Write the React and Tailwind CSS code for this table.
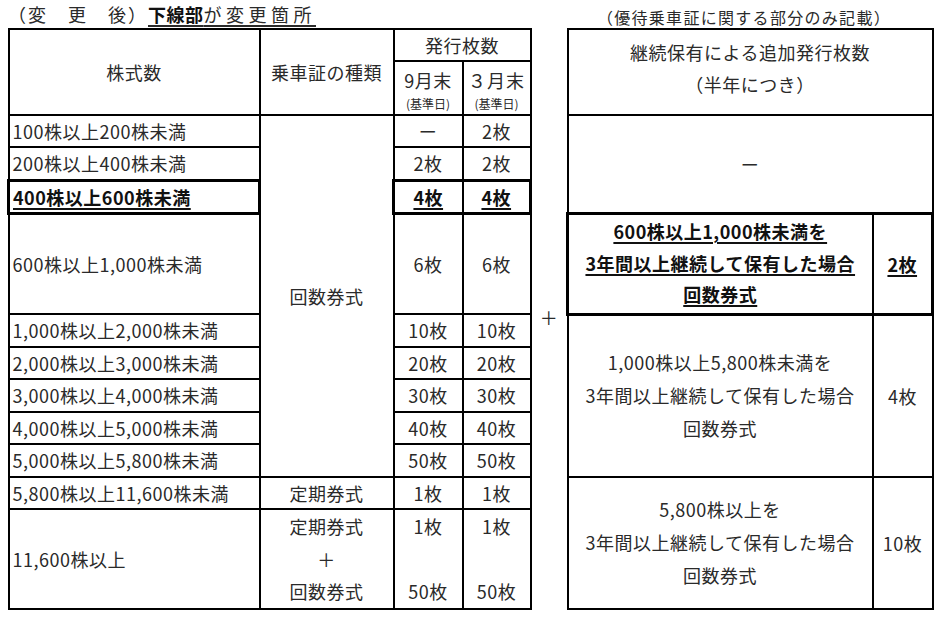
import React from "react";

const td = "border-2 border-black p-0 text-center align-middle";
const tdLeft = "border-2 border-black p-0 pl-[3px] text-left align-middle";
const hl = "underline decoration-2 underline-offset-[3px] font-bold text-[#111]";

const midRows = [
  ["1,000株以上2,000株未満", "10枚"],
  ["2,000株以上3,000株未満", "20枚"],
  ["3,000株以上4,000株未満", "30枚"],
  ["4,000株以上5,000株未満", "40枚"],
  ["5,000株以上5,800株未満", "50枚"],
];

export default function App() {
  return (
    <div className="w-[941px] h-[617px] bg-white text-[#2a2a2a] font-['Noto_Sans_CJK_JP','Noto_Sans',sans-serif] text-[18px] tracking-[0.5px]">
      {/* title line */}
      <div className="flex items-center h-[28px] pl-[8px] pr-[50px]">
        <div className="leading-[22px]">
          <span className="tracking-[2px]">（変　更　後）</span>
          <span className="underline underline-offset-[3px] decoration-[1.5px]">
            <span className="font-bold text-[#111]">下線部</span>
            <span className="tracking-[4.5px]">が変更箇所</span>
          </span>
        </div>
        <div className="ml-auto text-[16px] tracking-[1.3px] leading-[22px] pt-[5px]">
          （優待乗車証に関する部分のみ記載）
        </div>
      </div>

      <div className="pl-[7px]">
        <table className="table-fixed border-collapse w-[924px] leading-[26px]">
          <colgroup>
            <col className="w-[251px]" />
            <col className="w-[134px]" />
            <col className="w-[69px]" />
            <col className="w-[68px]" />
            <col className="w-[37px]" />
            <col className="w-[305px]" />
            <col className="w-[60px]" />
          </colgroup>
          <tbody>
            <tr className="h-[32px]">
              <td rowSpan={2} className={td}>株式数</td>
              <td rowSpan={2} className={td}>乗車証の種類</td>
              <td colSpan={2} className={td}>発行枚数</td>
              <td rowSpan={13} className="p-0 pb-[4px] text-center align-middle">＋</td>
              <td rowSpan={2} colSpan={2} className={td}>
                <div className="leading-[32px] pb-[8px]">
                  <div>継続保有による追加発行枚数</div>
                  <div>（半年につき）</div>
                </div>
              </td>
            </tr>
            <tr className="h-[54px]">
              <td className={td}>
                <div className="leading-[28px] pt-[4px]">9月末</div>
                <div className="text-[12px] leading-[20px] tracking-normal">(基準日)</div>
              </td>
              <td className={td}>
                <div className="leading-[28px] pt-[4px] tracking-[1px]">３月末</div>
                <div className="text-[12px] leading-[20px] tracking-normal">(基準日)</div>
              </td>
            </tr>

            <tr className="h-[32px]">
              <td className={tdLeft}>100株以上200株未満</td>
              <td rowSpan={9} className={td}>回数券式</td>
              <td className={td}>ー</td>
              <td className={td}>2枚</td>
              <td rowSpan={3} colSpan={2} className={td}>ー</td>
            </tr>
            <tr className="h-[33px]">
              <td className={tdLeft}>200株以上400株未満</td>
              <td className={td}>2枚</td>
              <td className={td}>2枚</td>
            </tr>
            <tr className="h-[33px]">
              <td className="border-[3px] border-black p-0 pl-[3px] text-left align-middle">
                <span className={hl}>400株以上600株未満</span>
              </td>
              <td className="border-2 border-l-[3px] border-y-[3px] border-black p-0 text-center align-middle">
                <span className={hl}>4枚</span>
              </td>
              <td className="border-2 border-r-[3px] border-y-[3px] border-black p-0 text-center align-middle">
                <span className={hl}>4枚</span>
              </td>
            </tr>
            <tr className="h-[101px]">
              <td className={tdLeft}>600株以上1,000株未満</td>
              <td className={td}>6枚</td>
              <td className={td}>6枚</td>
              <td className="border-2 border-l-[3px] border-y-[3px] border-black p-0 text-center align-middle">
                <div className="leading-[31.5px]">
                  <div><span className={hl}>600株以上1,000株未満を</span></div>
                  <div><span className={hl}>3年間以上継続して保有した場合</span></div>
                  <div><span className={hl}>回数券式</span></div>
                </div>
              </td>
              <td className="border-2 border-r-[3px] border-y-[3px] border-black p-0 text-center align-middle">
                <span className={hl}>2枚</span>
              </td>
            </tr>

            {midRows.map(([label, n], i) => (
              <tr key={label} className="h-[32.5px]">
                <td className={tdLeft}>{label}</td>
                <td className={td}>{n}</td>
                <td className={td}>{n}</td>
                {i === 0 && (
                  <>
                    <td rowSpan={5} className={td}>
                      <div className="leading-[33px]">
                        <div>1,000株以上5,800株未満を</div>
                        <div>3年間以上継続して保有した場合</div>
                        <div>回数券式</div>
                      </div>
                    </td>
                    <td rowSpan={5} className={td}>4枚</td>
                  </>
                )}
              </tr>
            ))}

            <tr className="h-[32.5px]">
              <td className={tdLeft}>5,800株以上11,600株未満</td>
              <td className={td}>定期券式</td>
              <td className={td}>1枚</td>
              <td className={td}>1枚</td>
              <td rowSpan={2} className={td}>
                <div className="leading-[33px]">
                  <div>5,800株以上を</div>
                  <div>3年間以上継続して保有した場合</div>
                  <div>回数券式</div>
                </div>
              </td>
              <td rowSpan={2} className={td}>10枚</td>
            </tr>
            <tr className="h-[95px]">
              <td className={tdLeft}>11,600株以上</td>
              <td className={td}>
                <div className="leading-[32.5px]">
                  <div>定期券式</div>
                  <div>＋</div>
                  <div>回数券式</div>
                </div>
              </td>
              <td className={td}>
                <div className="leading-[32.5px]">
                  <div>1枚</div>
                  <div>&nbsp;</div>
                  <div>50枚</div>
                </div>
              </td>
              <td className={td}>
                <div className="leading-[32.5px]">
                  <div>1枚</div>
                  <div>&nbsp;</div>
                  <div>50枚</div>
                </div>
              </td>
            </tr>
          </tbody>
        </table>
      </div>
    </div>
  );
}
